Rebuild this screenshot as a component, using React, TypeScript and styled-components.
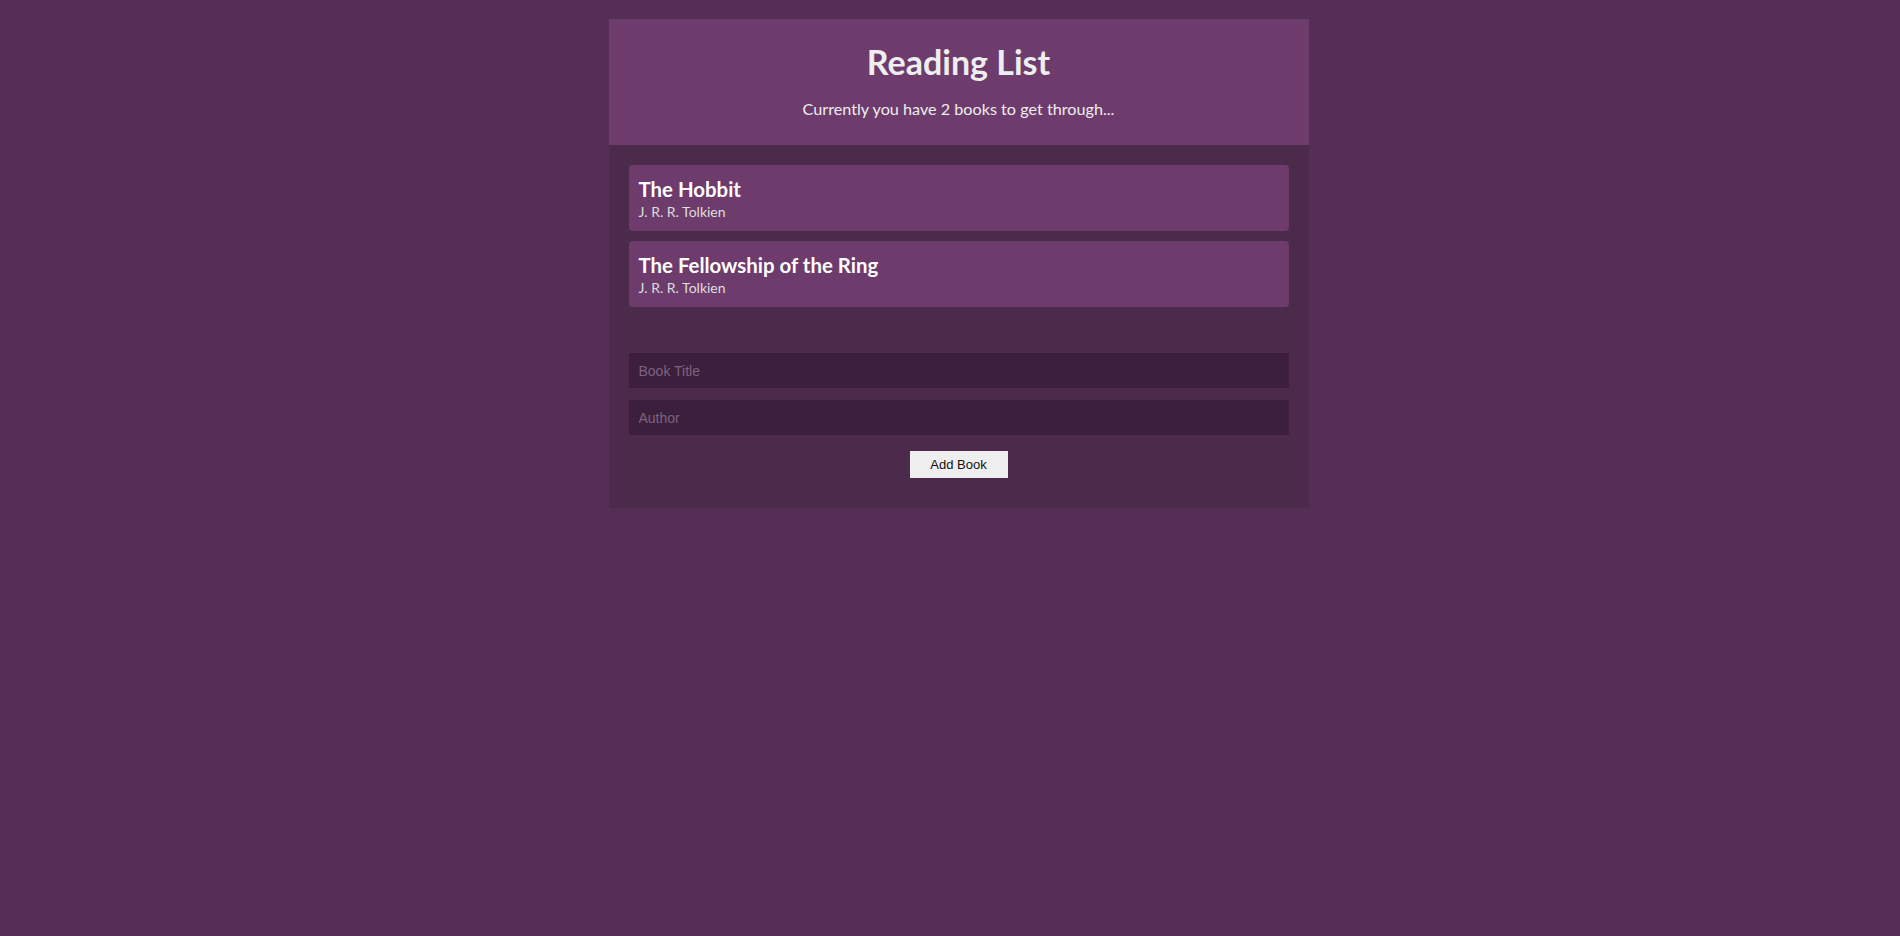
import * as React from "react";
import styled, { createGlobalStyle } from "styled-components";

interface Book {
  id: number;
  title: string;
  author: string;
}

const initialBooks: Book[] = [
  { id: 1, title: "The Hobbit", author: "J. R. R. Tolkien" },
  { id: 2, title: "The Fellowship of the Ring", author: "J. R. R. Tolkien" },
];

const App = () => {
  const [books, setBooks] = React.useState<Book[]>(initialBooks);
  const [title, setTitle] = React.useState("");
  const [author, setAuthor] = React.useState("");

  const addBook = (e: React.FormEvent<HTMLFormElement>) => {
    e.preventDefault();
    if (!title) return;
    setBooks([...books, { id: Date.now(), title, author }]);
    setTitle("");
    setAuthor("");
  };

  return (
    <Page>
      <GlobalStyle />
      <Wrapper>
        <Navbar>
          <Title>Reading List</Title>
          <Summary>Currently you have {books.length} books to get through...</Summary>
        </Navbar>
        <Body>
          <BookList>
            {books.map((book) => (
              <BookItem key={book.id}>
                <BookTitle>{book.title}</BookTitle>
                <BookAuthor>{book.author}</BookAuthor>
              </BookItem>
            ))}
          </BookList>
          <StyledForm onSubmit={(e) => addBook(e)}>
            <TextInput
              type="text"
              placeholder="Book Title"
              value={title}
              onChange={(e) => setTitle(e.target.value)}
            />
            <TextInput
              type="text"
              placeholder="Author"
              value={author}
              onChange={(e) => setAuthor(e.target.value)}
            />
            <SubmitButton type="submit">Add Book</SubmitButton>
          </StyledForm>
        </Body>
      </Wrapper>
    </Page>
  );
};

const GlobalStyle = createGlobalStyle`
  html, body {
    margin: 0;
    padding: 0;
    background: #542e54;
    font-family: Lato, "Noto Sans", sans-serif;
  }
`;

const Page = styled.div`
  min-height: 936px;
  padding: 19px 0 0 17px;
  box-sizing: border-box;
`;

const Wrapper = styled.div`
  width: 700px;
  margin: 0 auto;
  background: #4b2a4b;
`;

const Navbar = styled.div`
  background: #6d3c6d;
  height: 126px;
  box-sizing: border-box;
  padding-top: 23px;
  text-align: center;
  color: #eee;
`;

const Title = styled.h1`
  font-size: 34px;
  font-weight: 700;
  line-height: 40px;
  margin: 0 0 17px;
`;

const Summary = styled.p`
  font-size: 16.2px;
  line-height: 20px;
  margin: 0;
`;

const Body = styled.div`
  padding: 20px 20px 30px;
`;

const BookList = styled.ul`
  list-style: none;
  margin: 0;
  padding: 0;
  display: flex;
  flex-direction: column;
  gap: 10px;
`;

const BookItem = styled.li`
  background: #6d3c6d;
  border-radius: 4px;
  height: 66px;
  box-sizing: border-box;
  padding: 13px 10px 0;
  color: #fff;
`;

const BookTitle = styled.div`
  font-size: 20.4px;
  font-weight: 700;
  line-height: 22px;
`;

const BookAuthor = styled.div`
  font-size: 14px;
  line-height: 20px;
  color: #ddd;
  margin-top: 2px;
`;

const StyledForm = styled.form`
  display: flex;
  flex-direction: column;
  align-items: center;
  gap: 12px;
  margin-top: 46px;
`;

const TextInput = styled.input`
  width: 100%;
  height: 35px;
  box-sizing: border-box;
  border: 0;
  outline: none;
  background: #3c1f3c;
  color: #eee;
  padding: 0 10px;
  font-family: "Liberation Sans", Arial, sans-serif;
  font-size: 14px;

  &::placeholder {
    color: #7e627e;
  }
`;

const SubmitButton = styled.button`
  width: 98px;
  height: 27px;
  margin-top: 4px;
  border: 0;
  background: #efefef;
  color: #111;
  font-family: "Liberation Sans", Arial, sans-serif;
  font-size: 13px;
  cursor: pointer;
`;

export default App;
